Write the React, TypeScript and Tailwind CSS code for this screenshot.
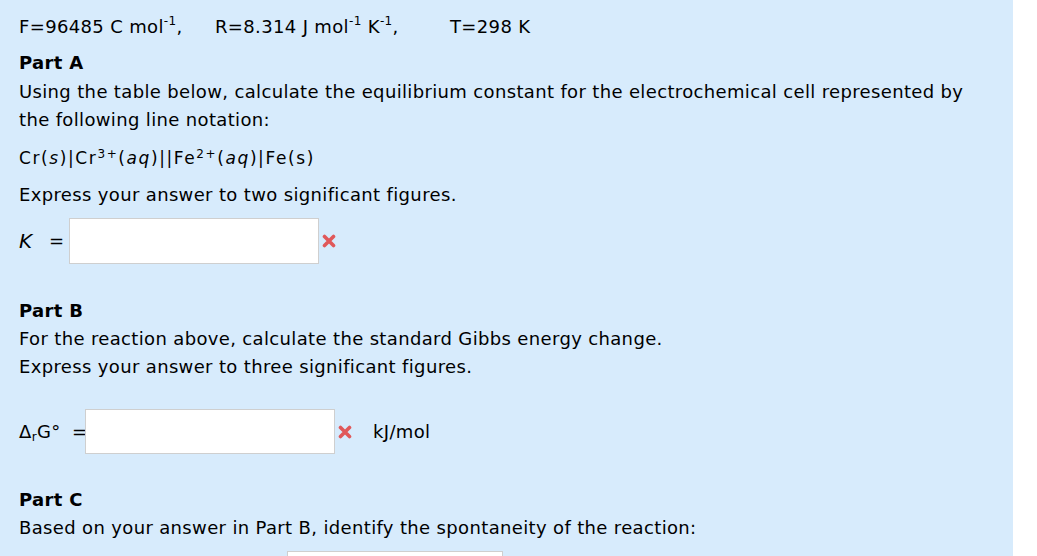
const font = { fontFamily: '"DejaVu Sans", Verdana, sans-serif' };

function Cross() {
    return (
        <svg width="14" height="14" viewBox="0 0 14 14" className="shrink-0">
            <path d="M2.5 2.5 L11.5 11.5 M11.5 2.5 L2.5 11.5" stroke="#e0585a" strokeWidth="3.6" strokeLinecap="round" />
        </svg>
    );
}

export default function App() {
    return (
        <div className="w-[1013px] min-h-[600px] bg-[#d7ebfc] text-black pl-[19px] pt-[13px] text-[18px] tracking-[0.35px] leading-[28px]" style={font}>
            {/* Constants */}
            <div className="flex items-baseline">
                <span className="w-[196px]">
                    F=96485 C mol<sup className="text-[12px] top-[-0.7em]">-1</sup>,
                </span>
                <span className="w-[235px]">
                    R=8.314 J mol<sup className="text-[12px] top-[-0.7em]">-1</sup> K<sup className="text-[12px] top-[-0.7em]">-1</sup>,
                </span>
                <span>T=298 K</span>
            </div>

            {/* Part A */}
            <h3 className="font-bold mt-[8px]">Part A</h3>
            <p className="mt-[1px]">
                Using the table below, calculate the equilibrium constant for the electrochemical cell represented by
                <br />
                the following line notation:
            </p>
            <p className="mt-[10px] text-[17px] tracking-[1.6px]">
                Cr(<i>s</i>)|Cr<sup className="text-[12px]">3+</sup>(<i>aq</i>)||Fe<sup className="text-[12px]">2+</sup>(<i>aq</i>)|Fe(s)
            </p>
            <p className="mt-[9px]">Express your answer to two significant figures.</p>
            <div className="flex items-center mt-[9px]">
                <span className="italic text-[20px] w-[30px]">K</span>
                <span className="w-[20px]">=</span>
                <div className="w-[250px] h-[46px] bg-white border border-[#cfcfcf]" />
                <span className="ml-[3px]"><Cross /></span>
            </div>

            {/* Part B */}
            <h3 className="font-bold mt-[33px]">Part B</h3>
            <p>
                For the reaction above, calculate the standard Gibbs energy change.
                <br />
                Express your answer to three significant figures.
            </p>
            <div className="flex items-center mt-[28px]">
                <span className="w-[53px]">
                    Δ<sub className="text-[12px]">r</sub>G°
                </span>
                <span className="w-[13px]">=</span>
                <div className="w-[250px] h-[45px] bg-white border border-[#cfcfcf]" />
                <span className="ml-[3px]"><Cross /></span>
                <span className="ml-[21px]">kJ/mol</span>
            </div>

            {/* Part C */}
            <h3 className="font-bold mt-[32px]">Part C</h3>
            <p>Based on your answer in Part B, identify the spontaneity of the reaction:</p>
            <div className="ml-[268px] mt-[9px] w-[216px] h-[40px] bg-white border border-[#cfcfcf]" />
        </div>
    );
}
